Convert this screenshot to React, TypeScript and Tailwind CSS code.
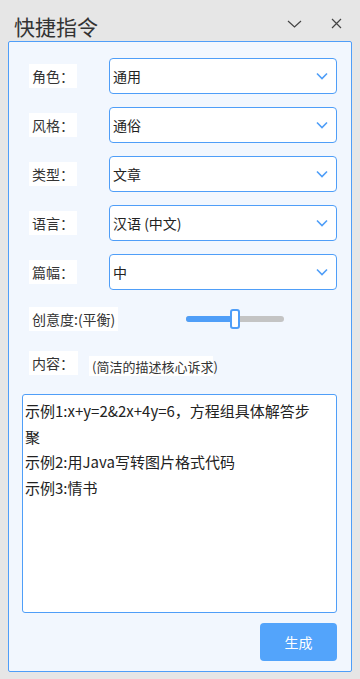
import React from "react";

const Chevron = () => (
  <svg width="12" height="8" viewBox="0 0 12 8" className="shrink-0">
    <path d="M1 1.5 L6 6.5 L11 1.5" fill="none" stroke="#4f9ef8" strokeWidth="1.6" />
  </svg>
);

const Label = ({ text, w }: { text: string; w: string }) => (
  <div className={`h-[24px] ${w} bg-white flex items-center pl-[3px] text-[14px] text-[#333] leading-none whitespace-nowrap`}>
    {text}
  </div>
);

const SelectRow = ({ label, value }: { label: string; value: string }) => (
  <div className="flex items-center h-[36px] mb-[13px] pl-[7px]">
    <div className="w-[80px] flex">
      <Label text={label} w="w-[48px]" />
    </div>
    <div className="w-[228px] h-[36px] rounded-[4px] border border-[#4f9ef8] bg-white flex items-center justify-between pl-[3px] pr-[8px]">
      <span className="text-[14px] text-[#222]">{value}</span>
      <Chevron />
    </div>
  </div>
);

export default function App() {
  return (
    <div
      className="w-[360px] h-[679px] bg-[#e6e6e6] flex flex-col"
      style={{ fontFamily: "'Noto Sans CJK SC', 'Noto Sans', sans-serif" }}
    >
      <div className="h-[41px] flex items-start justify-between pl-[14px] pr-[18px]">
        <div className="pt-[14px] text-[21px] leading-[24px] text-[#333]">快捷指令</div>
        <div className="flex items-center gap-[29px] pt-[18px]">
          <svg width="15" height="8" viewBox="0 0 15 8">
            <path d="M1 1 L7.5 7 L14 1" fill="none" stroke="#444" strokeWidth="1.2" />
          </svg>
          <svg width="11" height="11" viewBox="0 0 11 11">
            <path d="M1 1 L10 10 M10 1 L1 10" fill="none" stroke="#444" strokeWidth="1.2" />
          </svg>
        </div>
      </div>
      <div className="ml-[8px] w-[344px] h-[631px] border border-[#4f9ef8] rounded-[2px] bg-[#f2f7fe] pl-[13px] pr-[14px] pt-[16px] flex flex-col">
        <SelectRow label="角色：" value="通用" />
        <SelectRow label="风格：" value="通俗" />
        <SelectRow label="类型：" value="文章" />
        <SelectRow label="语言：" value="汉语 (中文)" />
        <SelectRow label="篇幅：" value="中" />
        <div className="flex items-center pl-[7px] mt-[4px] h-[24px]">
          <Label text="创意度:(平衡)" w="w-[89px]" />
          <div className="ml-[68px] relative w-[98px] h-[6px] rounded-full bg-[#c4c4c4]">
            <div className="absolute left-0 top-0 h-[6px] w-[48px] rounded-full bg-[#4f9ef8]" />
            <div className="absolute left-[44px] top-[-7px] w-[10px] h-[20px] rounded-[3px] bg-white border-2 border-[#4f9ef8]" />
          </div>
        </div>
        <div className="flex items-start pl-[7px] mt-[20px]">
          <Label text="内容：" w="w-[49px]" />
          <div className="ml-[11px] mt-[5px] h-[20px] w-[124px] bg-white flex items-center pl-[3px] text-[13px] text-[#333] leading-none whitespace-nowrap">
            (简洁的描述核心诉求)
          </div>
        </div>
        <div className="mt-[18px] w-[315px] h-[219px] rounded-[3px] border border-[#4f9ef8] bg-white pl-[2px] pt-[3px] text-[15px] leading-[25.5px] text-[#222]">
          <div>示例1:x+y=2&amp;2x+4y=6，方程组具体解答步</div>
          <div>聚</div>
          <div>示例2:用Java写转图片格式代码</div>
          <div>示例3:情书</div>
        </div>
        <div className="flex justify-end mt-[10px]">
          <div className="w-[77px] h-[38px] rounded-[4px] bg-[#53a4fb] flex items-center justify-center text-white text-[14px]">
            生成
          </div>
        </div>
      </div>
    </div>
  );
}
